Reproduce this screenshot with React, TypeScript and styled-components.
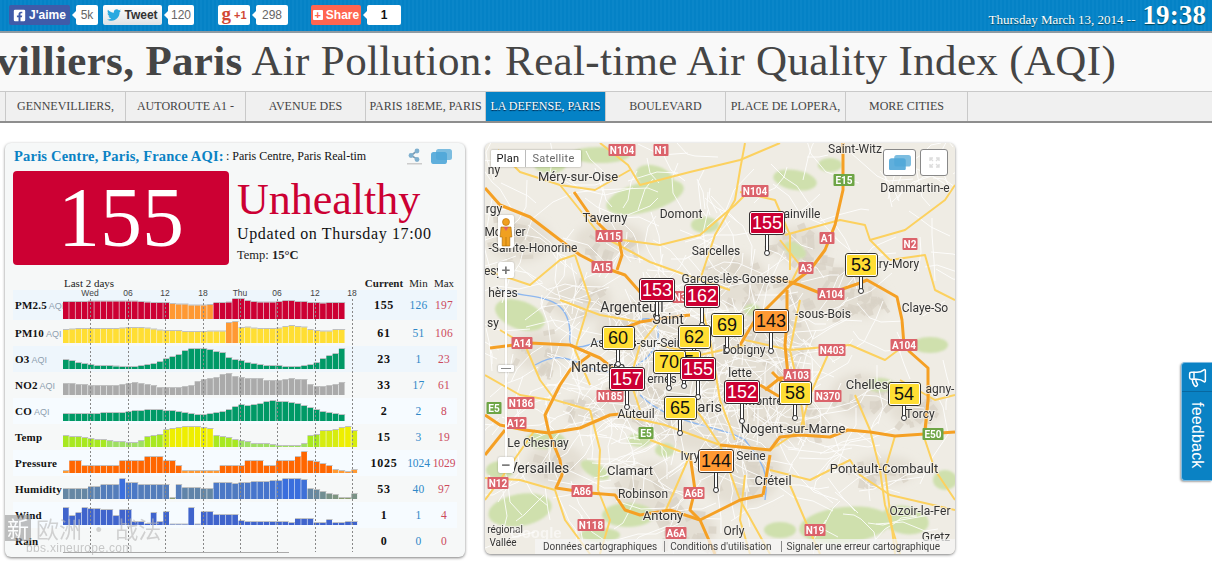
import React from "react";
import styled, { createGlobalStyle } from "styled-components";
import { FaFacebookSquare, FaTwitter } from "react-icons/fa";
import { Megaphone } from "lucide-react";

const Global = createGlobalStyle`
  html, body { margin: 0; padding: 0; background: #fff; overflow: hidden; }
  body { width: 1212px; height: 561px; font-family: "Liberation Serif", serif; position: relative; }
`;

/* ---------- top bar ---------- */
const TopBar = styled.header`
  height: 33px; display: flex; align-items: flex-start; box-sizing: border-box; padding: 5px 6px 0 9px;
  background: repeating-linear-gradient(90deg, #0a86c9 0 2px, #0482c6 2px 4px);
  border-bottom: 2px solid #8f9ba3;
`;
const Social = styled.div<{ $after?: number }>`
  display: flex; align-items: center; margin-right: ${p => p.$after ?? 5}px;
`;
const ShareButton = styled.div<{ $w: number; $bg: string; $color: string }>`
  width: ${p => p.$w}px; height: 20px; box-sizing: border-box; border-radius: 2px; background: ${p => p.$bg}; color: ${p => p.$color};
  display: flex; align-items: center; justify-content: center; gap: 3px;
  font: bold 12px "Liberation Sans", sans-serif; white-space: nowrap;
`;
const Count = styled.div<{ $w: number; $strong?: boolean }>`
  position: relative; width: ${p => p.$w}px; height: 20px; margin-left: 6px; background: #fff; border-radius: 2px;
  color: ${p => p.$strong ? "#111" : "#666"}; font: ${p => p.$strong ? "bold 12px" : "12px"} "Liberation Sans", sans-serif;
  display: flex; align-items: center; justify-content: center;
  &::before { content: ""; position: absolute; left: -4px; top: 6px; border: 4px solid transparent; border-left: 0; border-right-color: #fff; }
`;
const Gplus = styled.span`
  font: bold 19px "Liberation Serif", serif; color: #d14836; line-height: 16px; margin-top: -3px;
`;
const GplusOne = styled.span`font: bold 11px "Liberation Sans", sans-serif; color: #d14836;`;
const ShareSquare = styled.span`
  width: 10px; height: 10px; background: #fff; border-radius: 1px; color: #ff6550; font: bold 11px/10px "Liberation Sans", sans-serif; text-align: center;
`;
const Clock = styled.div`
  margin-left: auto; display: flex; align-items: baseline; color: #fff; white-space: nowrap; margin-top: -5px;
  font-size: 13px; text-shadow: 0 1px 1px #045;
`;
const ClockTime = styled.span`
  font: bold 27px "Liberation Serif", serif; margin-left: 7px; letter-spacing: .1px;
`;

/* ---------- title & nav ---------- */
const TitleBar = styled.div`
  height: 58px; background: #f9f9f9; overflow: hidden; white-space: nowrap; display: flex; align-items: center;
`;
const Title = styled.h1`
  margin: 0 0 4px -125px; font-weight: normal; font-size: 43px; color: #454545; letter-spacing: .35px;
  b { font-weight: bold; }
`;
const Nav = styled.nav`
  height: 32px; box-sizing: border-box; display: flex; background: #f0f0f0; padding-left: 5px;
  border-top: 1px solid #c9c9c9; border-bottom: 2px solid #8e8e8e;
`;
const NavItem = styled.a<{ $active?: boolean; $w?: number }>`
  width: ${p => p.$w ?? 120}px; box-sizing: border-box; white-space: nowrap; text-align: center; flex: none;
  border-left: 1px solid #c9c9c9; font-size: 12px; line-height: 28px; padding: 0 2px;
  color: ${p => p.$active ? "#fff" : "#444"}; background: ${p => p.$active ? "#0482c6" : "transparent"};
  text-shadow: ${p => p.$active ? "0 1px 1px #024" : "none"};
  &:last-child { border-right: 1px solid #c9c9c9; }
`;

/* ---------- content ---------- */
const Main = styled.main`
  display: flex; align-items: flex-start; gap: 20px; padding: 20px 0 0 5px;
`;
const Panel = styled.section`
  width: 460px; height: 414px; box-sizing: border-box; background: #f6f8f8; border-radius: 6px; padding: 5px 8px 0;
  box-shadow: 0 1px 3px rgba(0,0,0,.5); overflow: hidden; position: relative; flex: none;
`;
const PanelHead = styled.div`
  display: flex; align-items: center; height: 17px; padding-left: 1px;
`;
const PlaceName = styled.h2`
  margin: 0; font-size: 14.5px; color: #0a82c4; font-weight: bold; white-space: nowrap; letter-spacing: .2px;
`;
const Ticker = styled.div`
  width: 148px; white-space: nowrap; font-size: 12px; color: #111; margin-left: 2px;
`;
const HeadIcons = styled.div`
  margin-left: 33px; display: flex; gap: 9px; align-items: center;
`;
const Summary = styled.div`
  display: flex; gap: 8px; margin-top: 6px; height: 94px;
`;
const AqiBox = styled.div`
  width: 216px; height: 94px; background: #cc0033; border-radius: 4px; color: #fff; font-size: 84px; line-height: 94px;
  text-align: center; box-sizing: border-box;
`;
const Verdict = styled.div`display: flex; flex-direction: column;`;
const Level = styled.div`font-size: 44px; line-height: 48px; color: #cc0033; margin-top: 5px;`;
const Updated = styled.div`font-size: 16px; line-height: 19px; color: #111; margin-top: 0; letter-spacing: .63px; white-space: nowrap;`;
const Temp = styled.div`font-size: 12.5px; line-height: 18px; margin-top: 3px; color: #222; b { font-weight: bold; }`;

const COLS = "50px 299px 44px 25px 26px";
const Table = styled.div`
  position: relative; margin-top: 11px; width: 444px;
`;
const HeadRow = styled.div`
  display: grid; grid-template-columns: ${COLS}; height: 14px; align-items: center; font-size: 11px; color: #222;
`;
const HeadCell = styled.div<{ $strong?: boolean }>`
  text-align: center; font-weight: ${p => p.$strong ? "bold" : "normal"}; white-space: nowrap;
`;
const LastDays = styled.div`grid-column: 2; padding-left: 1px;`;
const Row = styled.div<{ $bg: string; $h: number }>`
  display: grid; grid-template-columns: ${COLS}; height: ${p => p.$h}px; align-items: center;
  background: ${p => p.$bg};
`;
const RowName = styled.div`
  font-size: 11px; font-weight: bold; color: #111; white-space: nowrap; padding-left: 2px; letter-spacing: .2px;
  span { font: 9px "Liberation Sans", sans-serif; color: #8ea0b0; letter-spacing: 0; margin-left: 2px; }
`;
const ChartSlot = styled.div`align-self: end; height: 26px; line-height: 0;`;
const Value = styled.div<{ $kind: "cur" | "min" | "max"; $small?: boolean }>`
  text-align: center; white-space: nowrap; font-size: ${p => p.$kind === "cur" ? 12 : 11.5}px;
  letter-spacing: ${p => p.$small ? "-.1px" : p.$kind === "cur" ? ".7px" : ".25px"};
  font-weight: ${p => p.$kind === "cur" ? "bold" : "normal"};
  color: ${p => p.$kind === "cur" ? "#111" : p.$kind === "min" ? "#2f88c8" : "#cc4a5c"};
`;
const TimeAxis = styled.div`position: absolute; left: 50px; top: 12px; pointer-events: none;`;
const TimeLabel = styled.span<{ $x: number }>`
  position: absolute; left: ${p => p.$x}px; top: 0; transform: translateX(-50%); font: 8.5px "Liberation Sans", sans-serif; color: #444;
`;
const GridLines = styled.svg`position: absolute; left: 50px; top: 14px; pointer-events: none;`;

/* watermark overlays the panel */
const Watermark = styled.div`
  position: absolute; left: 5px; top: 515px; width: 160px; pointer-events: none; opacity: .62;
`;
const WmLine = styled.div`display: flex; align-items: center; gap: 5px; font: 23px "Noto Sans CJK SC", sans-serif; color: #b9b9b9; line-height: 26px; white-space: nowrap;`;
const WmBadge = styled.span`
  background: #9a9a9a; color: #fff; width: 26px; height: 26px; display: block; text-align: center; font-size: 22px; line-height: 25px;
`;
const WmUrl = styled.div`font: 12px "Liberation Sans", sans-serif; color: #aaa; margin-left: 21px; letter-spacing: .3px;`;

/* ---------- map ---------- */
const MapCard = styled.section`
  position: relative; width: 470px; height: 411px; border-radius: 6px; overflow: hidden; background: #eeebe2;
  box-shadow: 0 1px 3px rgba(0,0,0,.5); flex: none;
`;
const MapArt = styled.svg`display: block;`;
const TypeToggle = styled.div`
  position: absolute; left: 6px; top: 7px; display: flex; background: #fff; box-shadow: 0 0 2px rgba(0,0,0,.4); height: 17px; border-radius: 1px;
`;
const TypeBtn = styled.div<{ $on?: boolean; $w: number }>`
  width: ${p => p.$w}px; text-align: center; font: 11px/17px Roboto, sans-serif; letter-spacing: .3px; color: ${p => p.$on ? "#111" : "#666"};
  & + & { border-left: 1px solid #bbb; }
`;
const Pegman = styled.div`
  position: absolute; left: 13px; top: 72px; width: 16px; height: 33px; background: #fff; border-radius: 2px; box-shadow: 0 0 2px rgba(0,0,0,.3);
`;
const ZoomBtn = styled.div<{ $top: number }>`
  position: absolute; left: 13px; top: ${p => p.$top}px; width: 16px; height: 16px; background: #fff; border-radius: 2px; color: #777;
  font: bold 15px/15px "Liberation Sans", sans-serif; text-align: center; box-shadow: 0 0 2px rgba(0,0,0,.3);
`;
const ZoomTrack = styled.div`
  position: absolute; left: 20px; top: 135px; width: 2px; height: 180px; background: #fff; box-shadow: 0 0 1px rgba(0,0,0,.3);
`;
const ZoomHandle = styled.div`
  position: absolute; left: 13px; top: 222px; width: 16px; height: 7px; background: #fff; border-radius: 1px; box-shadow: 0 0 2px rgba(0,0,0,.4);
  &::after { content: ""; position: absolute; left: 3px; right: 3px; top: 3px; height: 1px; background: #888; }
`;
const CornerBtn = styled.div<{ $left: number; $w: number }>`
  position: absolute; left: ${p => p.$left}px; top: 6px; width: ${p => p.$w}px; height: 27px; box-sizing: border-box; background: #fff;
  border: 1px solid #888; border-radius: 3px; display: flex; align-items: center; justify-content: center;
`;
const MapFooter = styled.div`
  position: absolute; left: 50px; right: 0; bottom: 0; height: 15px; padding-left: 8px; display: flex; align-items: center; box-sizing: border-box;
  background: rgba(245,245,245,.72); font: 10px Roboto, sans-serif; color: #444; white-space: nowrap;
`;
const FooterSep = styled.span<{ $gap: number }>`
  margin-left: ${p => p.$gap}px; border-left: 1px solid #888; padding-left: 5px;
`;
const Marker = styled.div<{ $x: number; $y: number; $w: number; $h: number; $bg: string; $fg: string; $tip: number; $z: number }>`
  position: absolute; left: ${p => p.$x - p.$w / 2}px; top: ${p => p.$y}px; width: ${p => p.$w}px; height: ${p => p.$tip}px; z-index: ${p => p.$z};
  b {
    display: block; height: ${p => p.$h}px; box-sizing: border-box; border: 1px solid #333; outline: 1px solid #fff; outline-offset: -2px;
    border-radius: 3px; background: ${p => p.$bg}; color: ${p => p.$fg}; text-align: center; position: relative; z-index: 1;
    font: 18px/${p => p.$h - 2}px "Liberation Sans", sans-serif;
  }
  i {
    position: absolute; left: 50%; margin-left: -2px; top: ${p => p.$h - 1}px; bottom: 1px; width: 4px; box-sizing: border-box;
    background: #fff; border: solid #333; border-width: 0 1px;
  }
  u {
    position: absolute; left: 50%; margin-left: -3px; bottom: -1px; width: 6px; height: 6px; box-sizing: border-box;
    background: #fff; border: 1px solid #333; border-radius: 50%;
  }
`;

/* ---------- feedback ---------- */
const Feedback = styled.aside`
  position: absolute; left: 1181px; top: 362px; width: 31px; height: 119px; background: #0a82c4; border-radius: 4px 0 0 4px;
  border: 1px solid #7fbbe0; border-right: 0; box-sizing: border-box; box-shadow: -1px 1px 2px rgba(0,0,0,.35); color: #fff;
  display: flex; flex-direction: column; align-items: center;
`;
const FeedbackIcon = styled.div`height: 28px; width: 100%; display: flex; align-items: center; justify-content: center; border-bottom: 1px solid #0868a0;`;
const FeedbackText = styled.div`
  writing-mode: vertical-rl; font: 16px "Liberation Sans", sans-serif; margin-top: 10px; letter-spacing: .2px;
`;

/* ---------- data ---------- */
const RED = "#cc0033", ORA = "#ff9933", YEL = "#ffde33", GRN = "#009966", GRY = "#aaaaaa";
function lerp(a: number[], b: number[], t: number) {
  const c = a.map((v, i) => Math.round(v + (b[i] - v) * Math.min(1, Math.max(0, t))));
  return `rgb(${c[0]},${c[1]},${c[2]})`;
}
const pm25 = [17,17,17,17,17.5,17.5,17.5,17.5,17.5,17.5,17.5,17.5,17,16.5,16,16,16,15,14.5,14.5,13.5,13.5,13.5,14,16,16,16.5,20,20,18,17,16.5,16.5,16.5,17,18,18,17,17,16,16,15.5,16,16,16];
const pm10 = [13,13.5,14,14,14,14,14,14,14,14.5,15,15,15,14.5,13.5,12.5,12,12,12,11,11,11,11,11.5,11.5,11.5,20,21,15,15.5,14.5,14,14,14,14.5,16,17,16,15.5,13,12,11.5,11.5,13,13];
const o3 = [9,8,6,5,4,3,3,3,2.5,2,2,2,3,4,5,7,10,12,14,18,20,20,20,19,17,16,11,9,8,6,5,4,3,3,3,2,2,2,3,4,6,10,13,15,20];
const no2 = [11,11,10,10,9,9,9,9,9,10,11,12,11,10,9,7,7,7,7,8,9,13,15,16,17,20,21,18,17,16,16,16,14,14,14,15,16,15,15,10,8,8,9,10,12];
const co = [7,7,7,7,7,7,8,8,8,8,9,10,10,11,11,11,10,10,9,8,7,6,6,7,8,9,11,14,16,15,16,17,19,20,19,19,18,17,15,13,11,9,8,7,6];
const temp = [11,10,10,9,8,7,7,6,5,5,4,4,6,10,11,12,17,18,19,20,20,20,19,18,11,10,9,7,6,5,3,3,3,2,1,1,1,1,3,11,12,16,16,17,19,20,16];
const pressure = [2,12,12,7,7,7,7,7,7,12,12,12,12,16,16,16,12,12,7,2,2,2,2,2,2,7,7,7,7,12,12,12,7,7,12,12,12,16,21,12,11,9,7,3,2,1,3];
const humidity = [10,10,10,10,12,12,14,14,14,20,16,16,14,14,14,14,14,1,14,11,11,11,10,10,16,16,16,15,16,16,17,17,17,18,18,20,20,20,19,10,9,7,5,4,1,1,5];
const wind = [17,9,12,17,16,16,15,15,9,15,15,3,3,1,12,3,13,0.5,0.5,0.5,17,0.5,13,13,10,10,10,10,4,3,3,3,3,3,3,3,2,6,6,6,2,2,5,2,2,3,3];
const tempC = (v: number) => v <= 6 ? "#9fdf62" : v <= 12 ? "#a8e820" : v <= 17 ? "#d6ec10" : "#eeee00";
type Metric = { name: string; aqi?: boolean; data?: number[]; color?: (v: number, i: number) => string; cur: string; min: string; max: string; bg: string; h: number; };
const metrics: Metric[] = [
  { name: "PM2.5", aqi: true, data: pm25, color: (_, i) => (i >= 17 && i <= 23 ? ORA : RED), cur: "155", min: "126", max: "197", bg: "#eef6fc", h: 30 },
  { name: "PM10", aqi: true, data: pm10, color: (_, i) => (i === 26 || i === 27 ? ORA : YEL), cur: "61", min: "51", max: "106", bg: "transparent", h: 26 },
  { name: "O3", aqi: true, data: o3, color: () => GRN, cur: "23", min: "1", max: "23", bg: "#eef6fc", h: 26 },
  { name: "NO2", aqi: true, data: no2, color: () => GRY, cur: "33", min: "17", max: "61", bg: "transparent", h: 26 },
  { name: "CO", aqi: true, data: co, color: () => GRN, cur: "2", min: "2", max: "8", bg: "#f6fbff", h: 26 },
  { name: "Temp", data: temp, color: tempC, cur: "15", min: "3", max: "19", bg: "transparent", h: 26 },
  { name: "Pressure", data: pressure, color: v => (v <= 3 ? "#ff9933" : "#ff6600"), cur: "1025", min: "1024", max: "1029", bg: "#f6fbff", h: 26 },
  { name: "Humidity", data: humidity, color: v => lerp([143,159,106], [58,110,221], v / 20), cur: "53", min: "40", max: "97", bg: "transparent", h: 26 },
  { name: "Wind", data: wind, color: () => "#4064cc", cur: "1", min: "1", max: "4", bg: "#f6fbff", h: 26 },
  { name: "Rain", cur: "0", min: "0", max: "0", bg: "transparent", h: 26 },
];
const ticks: [string, number][] = [["Wed",27],["06",65],["12",102],["18",140],["Thu",177],["06",214],["12",252],["18",289]];

function Bars({ m }: { m: Metric }) {
  const step = 6.27;
  const base = m.h === 30 ? 25 : 23;
  return (
    <svg width={299} height={26}>
      {m.data ? m.data.map((v, i) => (
        <g key={i}>
          <rect x={i * step} y={base - v} width={step - 0.6} height={v} fill={m.color!(v, i)} />
          <rect x={i * step} y={base - v - 1} width={step} height={1} fill="#888" opacity={0.5} />
        </g>
      )) : <rect x={0} y={24} width={226} height={1} fill="#aaa" />}
    </svg>
  );
}

/* ---------- map art ---------- */
function mulberry(a: number) {
  return () => { a |= 0; a = (a + 0x6d2b79f5) | 0; let t = Math.imul(a ^ (a >>> 15), 1 | a); t = (t + Math.imul(t ^ (t >>> 7), 61 | t)) ^ t; return ((t ^ (t >>> 14)) >>> 0) / 4294967296; };
}
const rnd = mulberry(1337);
const minorRoads: string[] = [];
for (let i = 0; i < 520; i++) {
  const central = i < 280;
  const g = () => (rnd() + rnd() + rnd()) / 3 - 0.5;
  let x = central ? 690 + g() * 420 : 485 + rnd() * 470;
  let y = central ? 385 + g() * 340 : 143 + rnd() * 411;
  let d = `M${x.toFixed(0)} ${y.toFixed(0)}`;
  let ang = rnd() * 6.28;
  const n = 2 + Math.floor(rnd() * 3);
  for (let k = 0; k < n; k++) {
    const l = 8 + rnd() * (central ? 14 : 22);
    ang += (rnd() - 0.5) * 1.2;
    x += Math.cos(ang) * l; y += Math.sin(ang) * l;
    d += `L${x.toFixed(0)} ${y.toFixed(0)}`;
  }
  minorRoads.push(d);
}
const urban: [number, number, number, number][] = [
  [700,385,74,66],[640,330,44,28],[610,240,36,18],[580,300,32,22],[735,280,32,26],[770,340,44,32],[800,245,28,18],[830,290,52,24],[860,300,28,18],
  [640,400,36,26],[650,490,36,28],[740,470,42,36],[790,420,38,22],[860,395,30,22],[915,410,26,16],[555,465,30,22],[520,240,32,22],[540,350,28,20],[885,470,32,14],[585,410,18,14],[690,530,26,20],
];
const blocks = Array.from({ length: 240 }, () => {
  const u = urban[Math.floor(rnd() * urban.length)];
  const a = rnd() * 6.28, r = Math.sqrt(rnd());
  return { x: u[0] + Math.cos(a) * r * u[2], y: u[1] + Math.sin(a) * r * u[3], w: 5 + rnd() * 9, h: 3 + rnd() * 6, t: rnd() * 180 };
});
const greens: [number, number, number, number, number][] = [
  [645,197,40,15,-15],[655,178,20,12,20],[705,225,14,8,0],[600,155,30,8,0],[550,165,16,8,0],[520,315,26,14,20],[545,440,20,9,0],[520,510,32,16,-10],[628,515,26,12,0],
  [640,440,12,7,0],[595,470,16,7,30],[845,525,46,18,-6],[905,520,24,14,10],[795,180,22,10,10],[830,165,12,7,0],[795,250,12,7,30],[930,345,18,8,0],[880,385,14,7,0],[665,450,10,7,0],[780,530,16,8,0],[500,470,14,9,0],[752,310,8,6,0],[945,480,12,10,0],[600,535,20,7,0]
];
const yellows = [
  "M600 143 L628 165 L640 185 L690 172 L740 160 L780 143","M498 150 L520 172 L560 185 L595 190 L630 170","M560 185 L600 235 L650 262 L700 280 L730 290","M622 240 L660 245 L700 235 L735 205 L750 190",
  "M740 192 L775 200 L790 235 L790 270","M785 235 L840 220 L865 225 L870 240 L905 230 L945 200 L955 185","M870 240 L890 260 L925 255 L935 290 L955 300","M745 143 L740 170 L735 200 L715 235 L700 280",
  "M485 270 L530 285 L560 260 L575 255","M575 255 L590 300 L575 350 L590 385","M560 300 L600 315 L640 322","M500 330 L525 345 L540 380 L555 400 L590 410","M485 375 L520 395 L550 400","M535 430 L500 480 L485 500",
  "M485 478 L520 480 L555 490 L565 520 L590 554","M590 410 L600 450 L598 490 L610 520 L600 554","M620 415 L665 425 L720 445 L770 450","M650 440 L690 455 L665 512","M690 400 L720 445 L740 500 L770 554",
  "M700 300 L710 340 L720 400 L735 440","M800 300 L790 350 L800 395 L805 430","M745 340 L790 350 L850 345 L885 360 L905 345","M830 350 L810 395 L800 430 L770 450","M855 395 L870 430 L880 470 L885 505 L900 554","M770 470 L810 480 L850 460 L860 475 L890 495 L955 510",
  "M895 436 L885 470 L895 554","M930 385 L925 440 L935 470 L955 500","M790 485 L805 520 L820 554","M745 475 L740 520 L750 554","M660 320 L640 345 L630 380 L640 410","M660 345 L700 355 L745 345","M780 240 L800 265 L790 285","M955 395 L935 400 L900 380",
];
const oranges = [
  "M485 188 L500 205 L530 217 L560 240 L580 255 L605 268 L625 275 L640 292 L655 300","M574 192 L590 215 L605 230 L619 240 L622 255 L617 270","M843 143 L843 190 L835 225 L825 250 L810 270 L790 285 L775 300 L755 320 L740 345",
  "M775 278 L800 285 L825 295 L860 283 L867 280 L897 297 L902 320 L904 345 L910 352 L928 368 L928 400 L925 430","M720 445 L770 450 L780 437 L800 435 L830 437 L848 430 L870 432 L895 436 L955 432",
  "M549 433 L560 460 L562 475 L556 488 L590 493 L615 495 L625 510 L640 515 L670 510 L700 520 L715 554","M485 415 L500 425 L525 430 L549 433 L580 428 L610 415 L620 414","M549 433 L545 415 L560 385 L570 370 L590 355","M490 348 L530 343 L570 345 L600 358 L615 370","M485 455 L505 430",
  "M690 455 L695 490 L690 510 L700 520","M763 495 L770 455","M763 495 L740 500 L700 520","M810 378 L780 378 L765 390","M785 385 L772 372","M785 400 L760 385","M787 290 L787 320 L785 345 L788 375","M620 330 L640 322 L665 318 L690 315",
];
const labels: [string, number, number, number?][] = [
  ["ny",494,174],["Méry-sur-Oise",578,181,13],["rgy",494,213],["Taverny",605,222,13],["Domont",681,218],["Moutier",505,236],["-Sainte-Honorine",533,252],["Sarcelles",716,255],["Garges-lès-Gonesse",735,283],
  ["Argenteuil",632,312,14],["Saint",668,324,14],["Saint-Witz",855,153],["Dammartin-e",915,192],["ainville",802,218],["try-Mory",897,268],["Claye-So",925,312],["-sous-Bois",823,318],["Bobigny",744,354],
  ["esy",493,275],["hères",503,297],["sy",493,327],["Nanterre",598,372,14],["Asnières-sur-Seine",640,347],["ernes",662,383],["Auteuil",636,418],["Paris",705,412,15],["Le Chesnay",538,447],["Versailles",539,473,14],["Clamart",630,475,13],["Robinson",643,498],["Antony",663,520,13],["Ivry",690,460],
  ["lette",740,377],["Montreuil",770,405],["Nogent-sur-Marne",793,433,13],["Seine",751,460],["Créteil",773,485,13],["Chelles",867,389,13],["Torcy",920,418],["agny-",940,393],["Pontault-Combault",884,473,13],["Ozoir-la-Fer",920,515],["Orly",734,535],["Gretz",936,541],["régional",505,533,10],["Vallée",503,546,10],
];
const shields: [string, number, number, string?][] = [
  ["N104",622,150],["N1",661,150],["A115",609,236],["A15",602,267],["N3",680,297],["A14",522,343],["N185",610,396],["N186",521,403],["A12",516,423],["N12",498,483],["A86",582,491],["N118",591,525],["A6B",694,493],["A6A",676,533],
  ["E5",646,433,"#6ea546"],["E5",494,408,"#6ea546"],["E15",844,180,"#6ea546"],["N104",755,191],["A1",827,238],["N2",910,244],["A3",806,268],["A104",831,294],["A104",904,345],["N403",832,350],["A103",797,375],["N370",828,396],["E50",933,434,"#6ea546"],["N19",815,530],
];
function MapDrawing() {
  return (
    <MapArt width={470} height={411} viewBox="485 143 470 411">
      <defs>
        <filter id="soft" x="-20%" y="-20%" width="140%" height="140%"><feGaussianBlur stdDeviation="4" /></filter>
        <filter id="softer" x="-20%" y="-20%" width="140%" height="140%"><feGaussianBlur stdDeviation="1.2" /></filter>
      </defs>
      <rect x={485} y={143} width={470} height={411} fill="#efece4" />
      <g filter="url(#soft)">
        {urban.map(([x, y, a, b], i) => <ellipse key={i} cx={x} cy={y} rx={a} ry={b} fill="#e4dfd4" />)}
      </g>
      {blocks.map((k, i) => <rect key={i} x={k.x} y={k.y} width={k.w} height={k.h} fill="#d8d2c6" opacity={0.75} transform={`rotate(${k.t.toFixed(0)} ${k.x.toFixed(0)} ${k.y.toFixed(0)})`} />)}
      <g filter="url(#softer)">
        {greens.map(([x, y, a, b, r], i) => <ellipse key={i} cx={x} cy={y} rx={a} ry={b} fill="#cfe0ad" transform={`rotate(${r} ${x} ${y})`} />)}
      </g>
      <g fill="none" stroke="#8db7ef" strokeWidth={1.4}>
        <path d="M500 290 C530 300 570 290 570 335 C565 365 620 330 640 320 C670 310 665 370 610 372 C580 372 570 345 535 365" />
        <path d="M640 395 C670 425 720 425 745 440 C760 460 770 470 765 500" />
      </g>
      <g fill="none" stroke="#ffffff" strokeWidth={1} strokeLinejoin="round" opacity={0.85}>
        {minorRoads.map((d, i) => <path key={i} d={d} />)}
      </g>
      <g fill="none" stroke="#fcd15f" strokeWidth={2} strokeLinejoin="round">
        {yellows.map((d, i) => <path key={i} d={d} />)}
      </g>
      <g fill="none" stroke="#f5a024" strokeWidth={3} strokeLinejoin="round">
        {oranges.map((d, i) => <path key={i} d={d} />)}
      </g>
      <g fontFamily="Roboto, sans-serif" fill="#333" textAnchor="middle" stroke="#f4f2ec" strokeWidth={2} paintOrder="stroke" strokeOpacity={0.75}>
        {labels.map(([t, x, y, s], i) => <text key={i} x={x} y={y} fontSize={s ?? 12}>{t}</text>)}
      </g>
      {shields.map(([t, x, y, c], i) => {
        const w = t.length * 6 + 3;
        return (
          <g key={i}>
            <rect x={x - w / 2} y={y - 6} width={w} height={12} fill={c ?? "#db636b"} rx={1} />
            <text x={x} y={y + 3.5} fontSize={10} fontWeight={700} fill="#fff" textAnchor="middle" fontFamily="Roboto, sans-serif">{t}</text>
          </g>
        );
      })}
      <text x={510} y={538} fontFamily="Liberation Sans, sans-serif" fontSize={15} fill="#fff" opacity={0.55} fontWeight={700}>Google</text>
    </MapArt>
  );
}
const Bubbles = ({ w = 21 }: { w?: number }) => (
  <svg width={w} height={w * 0.72} viewBox="0 0 21 15">
    <rect x={5} y={0} width={16} height={11} rx={2.5} fill="#7cbde0" />
    <rect x={0} y={3} width={16} height={12} rx={2.5} fill="#4fa6d8" opacity={0.9} />
  </svg>
);
const ShareIcon = () => (
  <svg width={15} height={17} viewBox="0 0 15 17" fill="none">
    <path d="M10 3 L4 7.5 L10 11" stroke="#7d9db3" strokeWidth={1.6} />
    <circle cx={10} cy={3} r={2.4} fill="#7fb0cf" /><circle cx={4} cy={7.5} r={2.4} fill="#7fb0cf" /><circle cx={10} cy={11.5} r={2.4} fill="#7fb0cf" />
    <rect x={0} y={15} width={15} height={1.5} fill="#ccc" />
  </svg>
);
const PegmanArt = () => (
  <svg width={16} height={33} viewBox="0 0 16 33">
    <circle cx={8} cy={7} r={3.5} fill="#f0a020" stroke="#b36b00" strokeWidth={0.6} />
    <path d="M3 12 h10 l.8 10 h-2 v9 h-7.6 v-9 h-2 z" fill="#f0a020" stroke="#a86800" strokeWidth={0.6} />
    <path d="M5.5 12 L8 16 L10.5 12 Z" fill="#e0606a" />
    <path d="M8 22 v9" stroke="#a86800" strokeWidth={0.6} />
  </svg>
);
const Expand = () => (
  <svg width={13} height={13} viewBox="0 0 13 13" fill="none" stroke="#ddd" strokeWidth={1.4}>
    <path d="M2 2 L5 5 M2 5 V2 H5 M11 2 L8 5 M8 2 H11 V5 M2 11 L5 8 M2 8 V11 H5 M11 11 L8 8 M11 8 V11 H8" />
  </svg>
);
type Pin = [string, number, number, number, string];
const pins: Pin[] = [
  ["155",767,211,44,RED],["53",861,253,40,YEL],["153",657,278,42,RED],["162",702,284,43,RED],["60",618,326,40,YEL],["62",694,325,40,YEL],["69",727,313,39,YEL],["143",771,309,44,ORA],
  ["75",684,350,38,YEL],["70",669,350,40,YEL],["155",698,357,42,RED],["157",627,367,42,RED],["65",680,396,39,YEL],["144",716,449,43,ORA],["152",742,380,43,RED],["58",795,381,39,YEL],["54",904,382,38,YEL],
];

const navItems = ["GENNEVILLIERS,","AUTOROUTE A1 -","AVENUE DES","PARIS 18EME, PARIS","LA DEFENSE, PARIS","BOULEVARD","PLACE DE LOPERA,"];

export default function App() {
  return (
    <>
      <Global />
      <TopBar>
        <Social>
          <ShareButton $w={61} $bg="#3f5ba9" $color="#fff"><FaFacebookSquare size={13} />J'aime</ShareButton>
          <Count $w={22}>5k</Count>
        </Social>
        <Social $after={24}>
          <ShareButton $w={59} $bg="linear-gradient(#fff,#dfe3e6)" $color="#333"><FaTwitter size={14} color="#2aa9e0" />Tweet</ShareButton>
          <Count $w={26}>120</Count>
        </Social>
        <Social $after={23}>
          <ShareButton $w={32} $bg="#fff" $color="#d14836"><Gplus>g</Gplus><GplusOne>+1</GplusOne></ShareButton>
          <Count $w={32}>298</Count>
        </Social>
        <Social>
          <ShareButton $w={50} $bg="#ff6550" $color="#fff"><ShareSquare>+</ShareSquare>Share</ShareButton>
          <Count $w={34} $strong>1</Count>
        </Social>
        <Clock>Thursday March 13, 2014 --<ClockTime>19:38</ClockTime></Clock>
      </TopBar>
      <TitleBar>
        <Title><b>Gennevilliers, Paris</b> Air Pollution: Real-time Air Quality Index (AQI)</Title>
      </TitleBar>
      <Nav>
        {navItems.map((t, i) => <NavItem key={t} $active={i === 4}>{t}</NavItem>)}
        <NavItem $w={123}>MORE CITIES</NavItem>
      </Nav>
      <Main>
        <Panel>
          <PanelHead>
            <PlaceName>Paris Centre, Paris, France AQI:</PlaceName>
            <Ticker>: Paris Centre, Paris Real-tim</Ticker>
            <HeadIcons><ShareIcon /><Bubbles /></HeadIcons>
          </PanelHead>
          <Summary>
            <AqiBox>155</AqiBox>
            <Verdict>
              <Level>Unhealthy</Level>
              <Updated>Updated on Thursday 17:00</Updated>
              <Temp>Temp: <b>15°C</b></Temp>
            </Verdict>
          </Summary>
          <Table>
            <HeadRow>
              <LastDays>Last 2 days</LastDays>
              <HeadCell $strong>Current</HeadCell>
              <HeadCell>Min</HeadCell>
              <HeadCell>Max</HeadCell>
            </HeadRow>
            {metrics.map(m => (
              <Row key={m.name} $bg={m.bg} $h={m.h}>
                <RowName>{m.name}{m.aqi && <span>AQI</span>}</RowName>
                <ChartSlot><Bars m={m} /></ChartSlot>
                <Value $kind="cur">{m.cur}</Value>
                <Value $kind="min" $small={m.min.length > 3}>{m.min}</Value>
                <Value $kind="max" $small={m.max.length > 3}>{m.max}</Value>
              </Row>
            ))}
            <GridLines width={299} height={266}>
              {ticks.map(([, x], i) => <line key={i} x1={x + 0.5} y1={9} x2={x + 0.5} y2={262} stroke="#888" strokeDasharray="2 2" strokeWidth={1} />)}
            </GridLines>
            <TimeAxis>
              {ticks.map(([t, x], i) => <TimeLabel key={i} $x={x}>{t}</TimeLabel>)}
            </TimeAxis>
          </Table>
        </Panel>
        <MapCard>
          <MapDrawing />
          <TypeToggle><TypeBtn $on $w={34}>Plan</TypeBtn><TypeBtn $w={55}>Satellite</TypeBtn></TypeToggle>
          <Pegman><PegmanArt /></Pegman>
          <ZoomTrack />
          <ZoomBtn $top={119}>+</ZoomBtn>
          <ZoomHandle />
          <ZoomBtn $top={314}>−</ZoomBtn>
          <CornerBtn $left={398} $w={33}><Bubbles w={22} /></CornerBtn>
          <CornerBtn $left={435} $w={28}><Expand /></CornerBtn>
          {pins.map(([t, x, y, tip, c], i) => (
            <Marker key={i} $x={x - 485} $y={y - 143} $w={t.length === 3 ? 36 : 33} $h={24} $tip={tip} $bg={c} $fg={c === RED ? "#fff" : "#111"} $z={i + 1}>
              <b>{t}</b><i /><u />
            </Marker>
          ))}
          <MapFooter>
            <span>Données cartographiques</span>
            <FooterSep $gap={7}>Conditions d'utilisation</FooterSep>
            <FooterSep $gap={9}>Signaler une erreur cartographique</FooterSep>
          </MapFooter>
        </MapCard>
      </Main>
      <Watermark>
        <WmLine><WmBadge>新</WmBadge>欧洲 · 战法</WmLine>
        <WmUrl>bbs.xineurope.com</WmUrl>
      </Watermark>
      <Feedback>
        <FeedbackIcon><Megaphone size={21} strokeWidth={1.7} /></FeedbackIcon>
        <FeedbackText>feedback</FeedbackText>
      </Feedback>
    </>
  );
}
